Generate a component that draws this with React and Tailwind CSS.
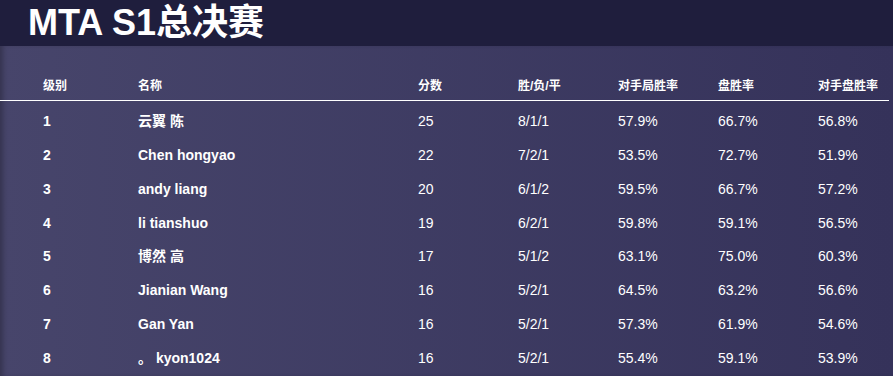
const rows = [
  ["1", "云翼 陈", "25", "8/1/1", "57.9%", "66.7%", "56.8%"],
  ["2", "Chen hongyao", "22", "7/2/1", "53.5%", "72.7%", "51.9%"],
  ["3", "andy liang", "20", "6/1/2", "59.5%", "66.7%", "57.2%"],
  ["4", "li tianshuo", "19", "6/2/1", "59.8%", "59.1%", "56.5%"],
  ["5", "博然 高", "17", "5/1/2", "63.1%", "75.0%", "60.3%"],
  ["6", "Jianian Wang", "16", "5/2/1", "64.5%", "63.2%", "56.6%"],
  ["7", "Gan Yan", "16", "5/2/1", "57.3%", "61.9%", "54.6%"],
  ["8", "。 kyon1024", "16", "5/2/1", "55.4%", "59.1%", "53.9%"],
];

const headers = ["级别", "名称", "分数", "胜/负/平", "对手局胜率", "盘胜率", "对手盘胜率"];
const cols = "grid grid-cols-[95px_280px_100px_100px_100px_100px_1fr]";

export default function App() {
  return (
    <div
      className="w-[893px] h-[376px] overflow-hidden text-white"
      style={{ fontFamily: '"Liberation Sans", "Noto Sans CJK SC", Arial, sans-serif' }}
    >
      <div className="h-[46px] bg-[#1f1e3d] pl-[28px] flex items-center">
        <h1 className="text-[36px] font-bold leading-none">MTA S1总决赛</h1>
      </div>
      <div className="h-[330px] bg-gradient-to-r from-[#47456b] to-[#35325a] shadow-[inset_5px_0_5px_-2px_rgba(0,0,0,0.25)] pt-[33px]">
        <div className="w-[889px]">
          <div className={`${cols} pl-[43px] h-[22px] border-b border-white text-[12px] font-bold leading-[14px]`}>
            {headers.map((h) => (
              <div key={h}>{h}</div>
            ))}
          </div>
          <div className="pt-[12px]">
            {rows.map((r) => (
              <div key={r[0]} className={`${cols} pl-[43px] h-[33.85px] text-[14px] leading-[16px]`}>
                {r.map((c, i) => (
                  <div key={i} className={i < 2 ? "font-bold" : ""}>
                    {c}
                  </div>
                ))}
              </div>
            ))}
          </div>
        </div>
      </div>
    </div>
  );
}
